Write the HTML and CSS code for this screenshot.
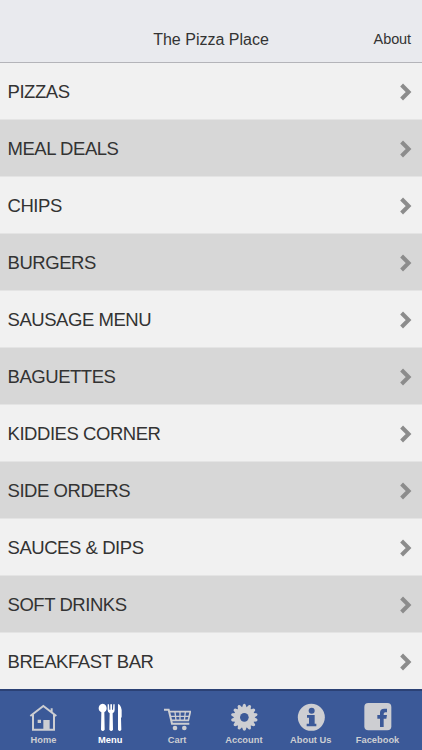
FILE: index.html
```html
<!DOCTYPE html>
<html lang="en">
<head>
    <meta charset="UTF-8">
    <meta name="viewport" content="width=device-width, initial-scale=1.0">
    <title>The Pizza Place</title>
    <link rel="stylesheet" href="styles.css">
</head>
<body>
    <svg class="defs" width="0" height="0">
        <symbol id="chevron" viewBox="0 0 12 18">
            <path d="M1.6 2 L8.6 9 L1.6 16" fill="none" stroke="currentColor" stroke-width="4"/>
        </symbol>
        <symbol id="tooth" viewBox="0 0 84 84">
            <path d="M36 14 L39 5 Q43 0 47 5 L50 14 V72 L47 81 Q43 86 39 81 L36 72z" fill="currentColor"/>
        </symbol>
    </svg>
    <header>
        <h1>The Pizza Place</h1>
        <a class="about" href="#">About</a>
    </header>
    <main>
        <ul class="menu">
            <li><span>PIZZAS</span><svg class="chevron"><use href="#chevron"/></svg></li>
            <li><span>MEAL DEALS</span><svg class="chevron"><use href="#chevron"/></svg></li>
            <li><span>CHIPS</span><svg class="chevron"><use href="#chevron"/></svg></li>
            <li><span>BURGERS</span><svg class="chevron"><use href="#chevron"/></svg></li>
            <li><span>SAUSAGE MENU</span><svg class="chevron"><use href="#chevron"/></svg></li>
            <li><span>BAGUETTES</span><svg class="chevron"><use href="#chevron"/></svg></li>
            <li><span>KIDDIES CORNER</span><svg class="chevron"><use href="#chevron"/></svg></li>
            <li><span>SIDE ORDERS</span><svg class="chevron"><use href="#chevron"/></svg></li>
            <li><span>SAUCES &amp; DIPS</span><svg class="chevron"><use href="#chevron"/></svg></li>
            <li><span>SOFT DRINKS</span><svg class="chevron"><use href="#chevron"/></svg></li>
            <li><span>BREAKFAST BAR</span><svg class="chevron"><use href="#chevron"/></svg></li>
        </ul>
    </main>
    <nav class="tabs">
        <a class="tab" href="#">
            <svg viewBox="0 0 84 84">
                <path d="M4 39 L43 9 L82 39 M12 35 V80 H75 V35 M68 28 V16" fill="none" stroke="currentColor" stroke-width="6"/>
                <path d="M26 50h10v10h-10z M43 51h19v30h-19z" fill="currentColor"/>
            </svg>
            Home
        </a>
        <a class="tab active" href="#">
            <svg viewBox="0 0 84 84" fill="currentColor">
                <path d="M20 2c8 0 12 7 12 14 0 6-3 10-7 12l1 52q-6 8-11 0l1-52c-5-2-8-6-8-12 0-7 4-14 12-14z"/>
                <path d="M35 4h4l1 16h3V4h5v16h3l1-16h4v17q0 7-6 10l1 49q-5 8-11 0l1-49q-6-3-6-10z"/>
                <path d="M66 3q8 2 11 18v20l-2 5 1 34q-5 8-10 0z"/>
            </svg>
            Menu
        </a>
        <a class="tab" href="#">
            <svg viewBox="0 0 84 84" fill="none" stroke="currentColor">
                <path d="M3 20h14l10 42h52" stroke-width="6"/>
                <path d="M19 26h63l-6 26H25" stroke-width="5"/>
                <path d="M22 40h57 M36 27l3 26 M51 27v26 M67 27l-3 26" stroke-width="4"/>
                <circle cx="36" cy="75" r="7" fill="currentColor" stroke="none"/>
                <circle cx="64" cy="75" r="7" fill="currentColor" stroke="none"/>
            </svg>
            Cart
        </a>
        <a class="tab" href="#">
            <svg viewBox="0 0 84 84">
                <circle cx="43" cy="43" r="31" fill="currentColor"/>
                <use href="#tooth" width="84" height="84"/>
                <use href="#tooth" width="84" height="84" transform="rotate(25.7 43 43)"/>
                <use href="#tooth" width="84" height="84" transform="rotate(51.4 43 43)"/>
                <use href="#tooth" width="84" height="84" transform="rotate(77.1 43 43)"/>
                <use href="#tooth" width="84" height="84" transform="rotate(102.9 43 43)"/>
                <use href="#tooth" width="84" height="84" transform="rotate(128.6 43 43)"/>
                <use href="#tooth" width="84" height="84" transform="rotate(154.3 43 43)"/>
                <circle class="cutout" cx="43" cy="43" r="13"/>
            </svg>
            Account
        </a>
        <a class="tab" href="#">
            <svg viewBox="0 0 84 84">
                <circle cx="43" cy="43" r="40.5" fill="currentColor"/>
                <circle class="cutout" cx="44" cy="23" r="9"/>
                <path class="cutout" d="M30 36h23v26h5v8H29v-8h7V44h-6z"/>
            </svg>
            About Us
        </a>
        <a class="tab" href="#">
            <svg viewBox="0 0 84 84">
                <rect x="1" y="0" width="81" height="82" rx="12" fill="currentColor"/>
                <path class="cutout" d="M48 72V47h-8V36h8v-7q0-12 13-12h8v11h-5q-5 0-5 5v3h10l-2 11h-8v25z"/>
            </svg>
            Facebook
        </a>
    </nav>
</body>
</html>
```
FILE: styles.css
```css
* { box-sizing: border-box; }
body {
    font-family: "Liberation Sans", Arial, sans-serif;
    margin: 0;
    height: 750px;
    display: flex;
    flex-direction: column;
    overflow: hidden;
    background: #f1f1f1;
    color: #333;
}
a { color: inherit; text-decoration: none; }
.defs { display: none; }
header {
    height: 63px;
    padding: 18px 11px 0;
    display: grid;
    grid-template-columns: 1fr auto 1fr;
    align-items: center;
    background: #e9eaee;
    border-bottom: 1px solid #b4b4b9;
}
h1 {
    grid-column: 2;
    margin: 0;
    font-size: 16px;
    font-weight: normal;
}
.about {
    justify-self: end;
    padding-bottom: 2px;
    font-size: 14.5px;
    letter-spacing: -0.1px;
}
main { flex: 1; min-height: 0; }
.menu { list-style: none; margin: 0; padding: 0; }
.menu li {
    height: 57px;
    padding: 2px 10px 0 7.5px;
    display: flex;
    align-items: center;
    justify-content: space-between;
    font-size: 18.5px;
    letter-spacing: -0.45px;
    background: #f1f1f1;
    border-bottom: 1px solid #e4e4e4;
}
.menu li:nth-child(even) { background: #d7d7d7; }
.chevron { width: 12px; height: 18px; color: #8c8c8c; }
.tabs {
    height: 61px;
    padding: 12px 11px 0 10px;
    display: flex;
    background: #3b5998;
    border-top: 2px solid #2b4175;
}
.tab {
    flex: 1 1 0;
    display: flex;
    flex-direction: column;
    align-items: center;
    gap: 3px;
    font-size: 9.3px;
    line-height: 12px;
    font-weight: bold;
    color: #cdced2;
    white-space: nowrap;
}
.tab svg { width: 28px; height: 28px; }
.tab.active { color: #fff; }
.cutout { fill: #3b5998; }
```
